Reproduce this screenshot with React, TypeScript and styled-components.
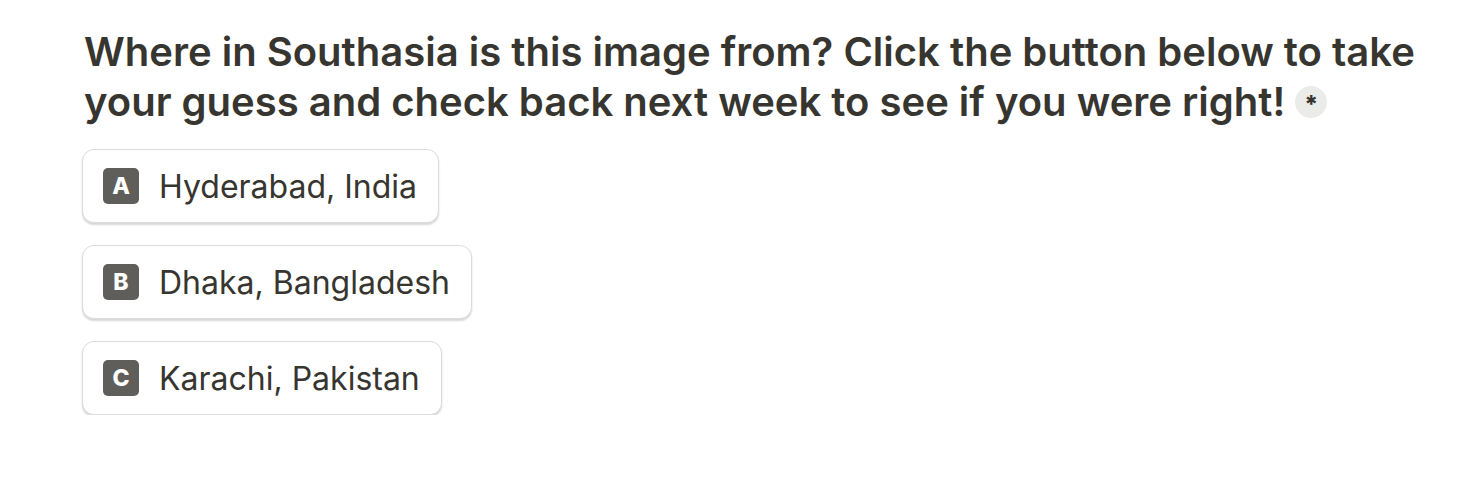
import styled, { createGlobalStyle } from "styled-components";

const GlobalStyle = createGlobalStyle`
  body {
    margin: 0;
    background: #ffffff;
    font-family: Inter, "Noto Sans", "Liberation Sans", sans-serif;
    color: #37352f;
  }
`;

const Page = styled.div`
  padding: 27px 40px 0 82px;
`;

const Question = styled.h2`
  margin: 0 0 22px 2px;
  max-width: 1350px;
  font-size: 40px;
  line-height: 50px;
  font-weight: 600;
  color: #37352f;
`;

const Required = styled.span`
  display: inline-flex;
  align-items: center;
  justify-content: center;
  width: 32px;
  height: 32px;
  margin-left: 10px;
  border-radius: 50%;
  background: #ebebea;
  color: #37352f;
  font-size: 24px;
  font-weight: 800;
  vertical-align: 3px;
  line-height: 1;
  padding-top: 7px;
  box-sizing: border-box;
`;

const Options = styled.div`
  display: flex;
  flex-direction: column;
  align-items: flex-start;
  gap: 22px;
`;

const Option = styled.button`
  display: flex;
  align-items: center;
  gap: 20px;
  height: 74px;
  padding: 0 21px 0 20px;
  border: 1px solid #dcdcda;
  border-radius: 12px;
  background: #ffffff;
  box-shadow: 0 2px 2px rgba(0, 0, 0, 0.16);
  font-family: inherit;
  font-size: 32px;
  color: #37352f;
  cursor: pointer;
`;

const Key = styled.span`
  display: flex;
  align-items: center;
  justify-content: center;
  width: 36px;
  height: 36px;
  border-radius: 5px;
  background: #605e5a;
  color: #ffffff;
  font-size: 23px;
  font-weight: 800;
`;

const choices = ["Hyderabad, India", "Dhaka, Bangladesh", "Karachi, Pakistan"];

export default function App() {
  return (
    <>
      <GlobalStyle />
      <Page>
        <Question>
          Where in Southasia is this image from? Click the button below to take
          your guess and check back next week to see if you were right!
          <Required>*</Required>
        </Question>
        <Options>
          {choices.map((label, i) => (
            <Option key={label}>
              <Key>{String.fromCharCode(65 + i)}</Key>
              {label}
            </Option>
          ))}
        </Options>
      </Page>
    </>
  );
}
